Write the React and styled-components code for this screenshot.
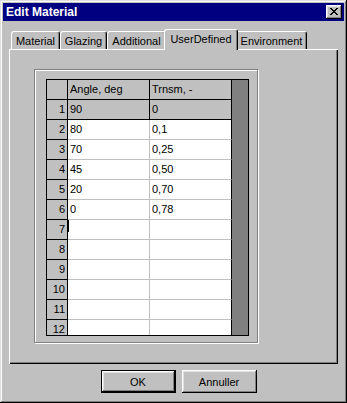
import React from 'react';
import styled, { createGlobalStyle } from 'styled-components';

const GlobalStyle = createGlobalStyle`
  html, body {
    margin: 0;
    padding: 0;
    background: #c0c0c0;
  }
  body {
    font-family: "Liberation Sans", Arial, sans-serif;
    font-size: 11px;
    color: #000;
  }
`;

const Window = styled.div`
  width: 347px;
  height: 403px;
  box-sizing: border-box;
  padding: 3px;
  background: #c0c0c0;
  box-shadow: inset -1px -1px #000, inset 1px 1px #dfdfdf,
    inset -2px -2px #808080, inset 2px 2px #fff;
  display: flex;
  flex-direction: column;
`;

const TitleBar = styled.div`
  height: 18px;
  flex-shrink: 0;
  background: #000080;
  color: #fff;
  display: flex;
  align-items: center;
  justify-content: space-between;
  padding: 0 2px 0 3px;
  font-weight: bold;
  font-size: 12px;
`;

const CloseButton = styled.div`
  width: 16px;
  height: 14px;
  box-sizing: border-box;
  background: #c0c0c0;
  box-shadow: inset -1px -1px #000, inset 1px 1px #fff,
    inset -2px -2px #808080, inset 2px 2px #dfdfdf;
  display: flex;
  padding: 3px 0 0 4px;
`;

const Body = styled.div`
  padding: 8px 6px 0;
  display: flex;
  flex-direction: column;
`;

const TabRow = styled.div`
  display: flex;
  align-items: flex-end;
  height: 20px;
  padding-left: 2px;
  position: relative;
  z-index: 1;
`;

const Tab = styled.div`
  position: relative;
  box-sizing: border-box;
  width: ${({ $width, $active }) => ($active ? $width + 4 : $width)}px;
  height: ${({ $active }) => ($active ? 21 : 18)}px;
  margin: ${({ $active }) => ($active ? '0 -2px -1px' : '0')};
  padding-bottom: ${({ $active }) => ($active ? 3 : 0)}px;
  z-index: ${({ $active }) => ($active ? 2 : 1)};
  background: #c0c0c0;
  border-top: 1px solid #fff;
  border-left: 1px solid #fff;
  border-right: 1px solid #000;
  border-radius: 3px 3px 0 0;
  box-shadow: inset -1px 0 #808080;
  display: flex;
  align-items: center;
  justify-content: center;
  white-space: nowrap;
`;

const Panel = styled.div`
  height: 315px;
  box-sizing: border-box;
  padding: 20px 0 0 25px;
  box-shadow: inset 1px 1px #fff, inset -1px -1px #000, inset -2px -2px #808080;
`;

const GroupBox = styled.div`
  width: 224px;
  height: 274px;
  box-sizing: border-box;
  border: 1px solid #808080;
  box-shadow: inset 1px 1px #fff, 1px 1px #fff;
  padding: 9px 0 0 11px;
`;

const Grid = styled.div`
  width: 203px;
  height: 257px;
  box-sizing: border-box;
  border: 1px solid #000;
  display: flex;
  overflow: hidden;
  background: #fff;
`;

const Table = styled.div`
  width: 185px;
  flex-shrink: 0;
  display: grid;
  grid-template-columns: 21px 82px 82px;
  grid-auto-rows: 20px;
  align-self: flex-start;
`;

const Filler = styled.div`
  flex: 1;
  background: #808080;
`;

const Cell = styled.div`
  position: relative;
  box-sizing: border-box;
  padding: 0 2px;
  line-height: 19px;
  white-space: nowrap;
  overflow: hidden;
  background: ${({ $fixed }) => ($fixed ? '#c0c0c0' : '#fff')};
  border-right: 1px solid ${({ $right }) => $right};
  border-bottom: 1px solid ${({ $bottom }) => $bottom};
  text-align: ${({ $align }) => $align || 'left'};
`;

const Caret = styled.span`
  position: absolute;
  left: 0;
  top: 0;
  width: 1px;
  height: 12px;
  background: #000;
`;

const Footer = styled.div`
  display: flex;
  justify-content: center;
  gap: 6px;
  padding: 6px 0 0 10px;
`;

const Button = styled.div`
  width: 75px;
  height: 23px;
  box-sizing: border-box;
  background: #c0c0c0;
  border: ${({ $default }) => ($default ? '1px solid #000' : 'none')};
  box-shadow: inset -1px -1px #000, inset 1px 1px #fff,
    inset -2px -2px #808080, inset 2px 2px #dfdfdf;
  display: flex;
  align-items: center;
  justify-content: center;
`;

const tabs = [
  { label: 'Material', width: 49 },
  { label: 'Glazing', width: 47 },
  { label: 'Additional', width: 59 },
  { label: 'UserDefined', width: 70, active: true },
  { label: 'Environment', width: 71 },
];

const rows = [
  ['90', '0'],
  ['80', '0,1'],
  ['70', '0,25'],
  ['45', '0,50'],
  ['20', '0,70'],
  ['0', '0,78'],
  ['', ''],
  ['', ''],
  ['', ''],
  ['', ''],
  ['', ''],
  ['', ''],
];

const BLACK = '#000';
const SILVER = '#c0c0c0';

const CloseGlyph = () => (
  <svg width="8" height="7" viewBox="0 0 8 7" shapeRendering="crispEdges">
    <path
      fill="#000"
      d="M0 0h2v1H0zM6 0h2v1H6zM1 1h2v1H1zM5 1h2v1H5zM2 2h4v1H2zM3 3h2v1H3zM2 4h4v1H2zM1 5h2v1H1zM5 5h2v1H5zM0 6h2v1H0zM6 6h2v1H6z"
    />
  </svg>
);

export default function App() {
  return (
    <>
      <GlobalStyle />
      <Window>
        <TitleBar>
          <span>Edit Material</span>
          <CloseButton>
            <CloseGlyph />
          </CloseButton>
        </TitleBar>
        <Body>
          <TabRow>
            {tabs.map((t) => (
              <Tab key={t.label} $width={t.width} $active={t.active}>
                {t.label}
              </Tab>
            ))}
          </TabRow>
          <Panel>
            <GroupBox>
              <Grid>
                <Table>
                  <Cell $fixed $right={BLACK} $bottom={BLACK} />
                  <Cell $fixed $right={BLACK} $bottom={BLACK}>Angle, deg</Cell>
                  <Cell $fixed $right={BLACK} $bottom={BLACK}>Trnsm, -</Cell>
                  {rows.map((r, i) => {
                    const first = i === 0;
                    const line = first ? BLACK : SILVER;
                    return (
                      <React.Fragment key={i}>
                        <Cell $fixed $right={BLACK} $bottom={BLACK} $align="right">
                          {i + 1}
                        </Cell>
                        <Cell $fixed={first} $right={line} $bottom={line}>
                          {i === 6 && <Caret />}
                          {r[0]}
                        </Cell>
                        <Cell $fixed={first} $right={BLACK} $bottom={line}>
                          {r[1]}
                        </Cell>
                      </React.Fragment>
                    );
                  })}
                </Table>
                <Filler />
              </Grid>
            </GroupBox>
          </Panel>
          <Footer>
            <Button $default>OK</Button>
            <Button>Annuller</Button>
          </Footer>
        </Body>
      </Window>
    </>
  );
}
